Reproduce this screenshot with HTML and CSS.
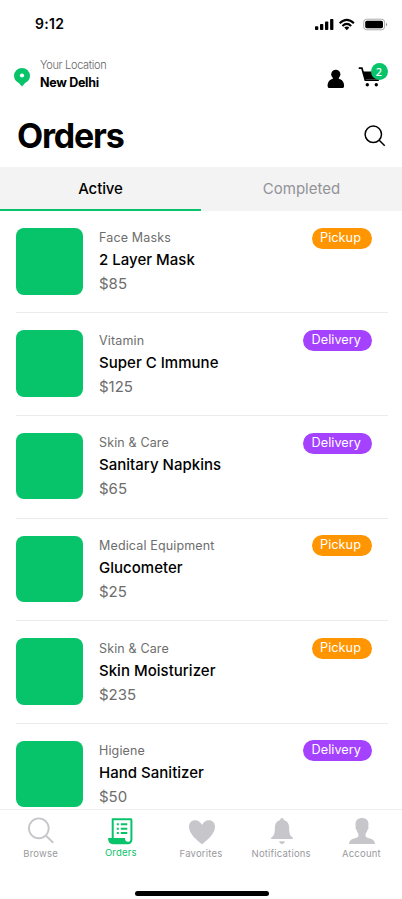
FILE: index.html
```html
<!DOCTYPE html>
<html lang="en">
<head>
<meta charset="utf-8">
<meta name="viewport" content="width=device-width, initial-scale=1">
<title>Orders</title>
<link rel="stylesheet" href="styles.css">
</head>
<body>
<div class="screen">
  <header class="status">
    <span class="time">9:12</span>
    <svg class="status-icons" width="74" height="14" viewBox="0 0 74 14">
      <rect x="0" y="8.2" width="3.3" height="3.8" rx=".8"/>
      <rect x="5" y="6" width="3.3" height="6" rx=".8"/>
      <rect x="10" y="3.5" width="3.3" height="8.5" rx=".8"/>
      <rect x="15.1" y="1" width="3.3" height="11" rx=".8"/>
      <g fill="none" stroke="#000" stroke-width="2.1"><path d="M24.700 5.200Q31.800-1.600 38.900 5.200M27.400 8Q31.800 3.900 36.200 8"/></g>
      <path d="M29.200 9.600Q31.800 7.600 34.400 9.600L31.800 12.200Z"/>
      <rect x="48.7" y="1.2" width="20.9" height="10.6" rx="3" fill="none" stroke="#aaa"/>
      <rect x="50.2" y="2.8" width="17.8" height="7.4" rx="1.6"/>
      <path d="M71 4.700Q73.400 6.500 71 8.300Z" fill="#999"/>
    </svg>
  </header>
  <section class="location">
    <svg class="pin" width="16" height="19" viewBox="0 0 16 19"><path d="M8 0a8 7.800 0 0 0-8 7.800c0 3.500 2.200 5.800 4.900 7.100L8 18.600l3.100-3.700C13.800 13.600 16 11.300 16 7.800A8 7.800 0 0 0 8 0Z" fill="#07c369"/><circle cx="8" cy="7.500" r="2.100" fill="#fff"/></svg>
    <div class="place"><span class="place-label">Your Location</span><strong class="place-name">New Delhi</strong></div>
    <svg class="user" width="18" height="20" viewBox="0 0 18 20"><circle cx="8.800" cy="5.300" r="4.600"/><path d="M6.300 8.500h5L12.200 10c2.800.5 4.900 3 4.900 6.800 0 1.500-.6 2.300-2.100 2.300H2.700C1.200 19.100.6 18.300.6 16.800.6 13 2.700 10.500 5.500 10Z"/></svg>
    <div class="cart">
      <svg width="24" height="22" viewBox="0 0 24 22"><path d="M.7 2.200h3.200l3.400 11.900h13.500" fill="none" stroke="#000" stroke-width="1.700"/><path d="M4.800 5.500H22l-2.300 7.600H7Z"/><circle cx="9.300" cy="18.700" r="1.700"/><circle cx="18.300" cy="18.700" r="1.700"/></svg>
      <span class="count">2</span>
    </div>
  </section>
  <section class="heading">
    <h1>Orders</h1>
    <svg class="search" width="22" height="22" viewBox="0 0 22 22" fill="none" stroke="#000" stroke-width="1.500"><circle cx="9.300" cy="9.300" r="8.200"/><path d="m15.200 15.200 5.500 5.500"/></svg>
  </section>
  <nav class="tabs"><a class="tab on">Active</a><a class="tab">Completed</a></nav>
  <main class="list">
    <article class="order"><div class="thumb"></div><div class="info"><span class="cat">Face Masks</span><span class="name">2 Layer Mask</span><span class="price">$85</span></div><span class="tag pickup">Pickup</span></article>
    <article class="order"><div class="thumb"></div><div class="info"><span class="cat">Vitamin</span><span class="name">Super C Immune</span><span class="price">$125</span></div><span class="tag delivery">Delivery</span></article>
    <article class="order"><div class="thumb"></div><div class="info"><span class="cat">Skin &amp; Care</span><span class="name">Sanitary Napkins</span><span class="price">$65</span></div><span class="tag delivery">Delivery</span></article>
    <article class="order"><div class="thumb"></div><div class="info"><span class="cat">Medical Equipment</span><span class="name">Glucometer</span><span class="price">$25</span></div><span class="tag pickup">Pickup</span></article>
    <article class="order"><div class="thumb"></div><div class="info"><span class="cat">Skin &amp; Care</span><span class="name">Skin Moisturizer</span><span class="price">$235</span></div><span class="tag pickup">Pickup</span></article>
    <article class="order"><div class="thumb"></div><div class="info"><span class="cat">Higiene</span><span class="name">Hand Sanitizer</span><span class="price">$50</span></div><span class="tag delivery">Delivery</span></article>
  </main>
  <footer class="bottom">
    <nav class="menu">
      <a class="item"><svg width="28" height="28" viewBox="0 0 28 28" fill="none" stroke="#c7c6cb" stroke-width="1.900"><circle cx="11.800" cy="11.300" r="9.900"/><path d="m18.800 18.500 7.400 7.200"/></svg><span>Browse</span></a>
      <a class="item current"><svg width="28" height="28" viewBox="0 0 28 28"><path d="M4.700 1.200h19c1 0 1.700.7 1.700 1.700v19.500c0 3.200-1.800 4.800-4.600 4.800H6c-3 0-4.900-2-4.900-6.200h3.600Z" fill="#07c369"/><path d="M6.700 3.200h16.700v19.200c0 1.600-.8 2.400-2.500 2.400s-2.800-1-3-3.800H6.700Z" fill="#fff"/><path d="M9.800 7.300h2M13.800 7.300h6.500M9.800 11.700h2M13.800 11.700h6.500M9.800 16.100h2M13.800 16.100h6.500" stroke="#07c369" stroke-width="2"/></svg><span>Orders</span></a>
      <a class="item"><svg width="28" height="28" viewBox="0 0 28 28"><path d="M14 27.200C10 24 1 17.500 1 9.700 1 6 3.600 3.300 7.100 3.300c3 0 5.500 1.800 6.900 4.700 1.400-2.900 3.900-4.700 6.900-4.700 3.500 0 6.100 2.700 6.100 6.400 0 7.800-9 14.300-13 17.500Z"/></svg><span>Favorites</span></a>
      <a class="item"><svg width="28" height="28" viewBox="0 0 28 28"><path d="M14 1c-1 0-1.700.7-1.800 1.900C8.800 3.700 7 6.400 6.900 10c-.1 6.300-.7 8.400-3 10.100-.6.500-.8.900-.8 1.900h21.800c0-1-.2-1.400-.8-1.900-2.300-1.700-2.900-3.800-3-10.100-.1-3.600-1.900-6.300-5.300-7.100C15.700 1.700 15 1 14 1ZM11.100 24.200h5.800c-.5 1.900-1.400 2.700-2.900 2.700s-2.400-.8-2.900-2.700Z"/></svg><span>Notifications</span></a>
      <a class="item"><svg width="28" height="28" viewBox="0 0 28 28"><path d="M14 1c-4.200 0-6.500 2.500-6.500 6.200 0 1.200.1 1.600.3 2.200-.7.800-.2 2.700.7 3.400.4 1.700 1 2.900 1.900 3.900v2.500c-.6 1.100-1.700 1.500-4.300 2.300C2.800 22.600 1 23.800 1 27h26c0-3.200-1.800-4.400-5.100-5.500-2.600-.8-3.700-1.200-4.300-2.300v-2.500c.9-1 1.500-2.200 1.900-3.900.9-.7 1.400-2.600.7-3.400.2-.6.300-1 .3-2.200C20.500 3.500 18.200 1 14 1Z"/></svg><span>Account</span></a>
    </nav>
    <div class="home"></div>
  </footer>
</div>
</body>
</html>
```
FILE: styles.css
```css
* { box-sizing: border-box; }
body { margin: 0; background: #fff; font-family: Inter, "Liberation Sans", sans-serif; color: #000; }
svg { display: block; flex: none; }
.screen { width: 402px; height: 899px; display: flex; flex-direction: column; overflow: hidden; }
.status { height: 48px; flex: none; display: flex; align-items: center; justify-content: space-between; padding: 0 13px 0 35px; }
.time { font-size: 14px; line-height: 18px; font-weight: 600; letter-spacing: .3px; }
.status-icons { margin-top: 1px; }
.location { height: 62px; flex: none; display: flex; align-items: flex-start; padding: 8px 14px 0; }
.pin { margin-top: 12px; }
.place { margin-left: 10px; display: flex; flex-direction: column; flex: 1; white-space: nowrap; }
.place-label { font-size: 11px; line-height: 18px; font-weight: 300; color: #666; letter-spacing: -.3px; }
.place-name { font-size: 12.500px; line-height: 18px; font-weight: 700; letter-spacing: -.3px; }
.user { margin: 13px 13px 0 0; }
.cart { position: relative; width: 30px; margin-top: 10px; }
.count { position: absolute; left: 12.500px; top: -3.500px; width: 17px; height: 17px; border-radius: 50%; background: #07c369; color: #fff; font: 500 11px/17px "Noto Sans", sans-serif; text-align: center; }
.heading { height: 57px; flex: none; display: flex; align-items: center; justify-content: space-between; padding: 0 16px 0 17px; }
h1 { margin: -5px 0 0; font-size: 34px; line-height: 40px; font-weight: 700; letter-spacing: -1.200px; }
.search { margin-top: -5px; }
.tabs { height: 44px; flex: none; display: flex; background: #f3f3f3; }
.tab { flex: 1; font-size: 15px; line-height: 44px; text-align: center; color: #929297; letter-spacing: 0; }
.tab.on { color: #000; font-weight: 500; letter-spacing: -.1px; border-bottom: 2px solid #07c369; }
.list { flex: 1; min-height: 0; overflow: hidden; padding: 0 14px 0 16px; }
.order { height: 102.600px; display: flex; align-items: flex-start; padding: 17px 16.500px 0 0; border-bottom: 1px solid #ebebeb; }
.order:first-child { height: 102.400px; }
.thumb { width: 66.500px; height: 66.500px; flex: none; border-radius: 8px; background: #07c369; }
.info { flex: 1; display: flex; flex-direction: column; margin: .4px 0 0 16.500px; white-space: nowrap; }
.cat { font-size: 12.500px; line-height: 20px; color: #6d6d6d; letter-spacing: .15px; }
.name { font-size: 15px; line-height: 24px; font-weight: 500; letter-spacing: .02px; }
.price { font-size: 15px; line-height: 24px; color: #6d6d6d; }
.tag { height: 21px; margin-top: -.4px; border-radius: 11px; padding: 0 10.500px 0 8.500px; color: #fff; font-size: 12.700px; line-height: 20.500px; letter-spacing: .05px; }
.pickup { background: #ff9500; }
.delivery { background: #a442ff; }
.bottom { height: 90px; flex: none; border-top: 1px solid #eee; background: #fff; display: flex; flex-direction: column; }
.menu { height: 60px; display: flex; padding: 7px 0 0 1px; }
.item { flex: 1; display: flex; flex-direction: column; align-items: center; font-size: 9.500px; line-height: 14px; color: #99999e; fill: #c7c6cb; letter-spacing: .2px; white-space: nowrap; }
.item span { margin: 2px 0 0 -1px; }
.item.current { color: #07c369; }
.item.current span { margin-top: 1px; }
.home { width: 134px; height: 5px; margin: 21px auto 0; border-radius: 3px; background: #000; transform: translateX(1px); }
```
